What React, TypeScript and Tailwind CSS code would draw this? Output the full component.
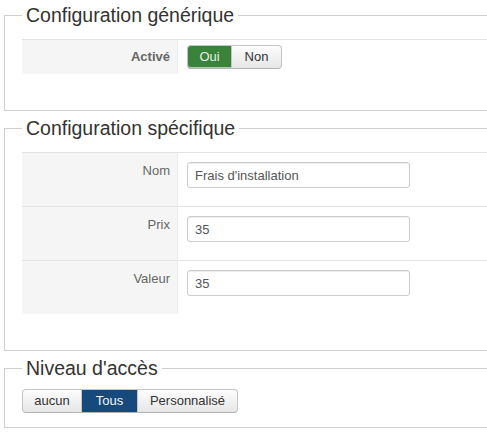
import type { ReactNode } from 'react'

const btnBase =
  'h-[24px] text-[13px] leading-[18px] border border-[#c5c5c5] border-b-[#b3b3b3] flex items-center justify-center'
const btnIdle = 'bg-linear-to-b from-[#fdfdfd] to-[#e6e6e6] text-[#333]'

function Fieldset({
  title,
  className,
  children,
}: {
  title: string
  className?: string
  children: ReactNode
}) {
  return (
    <fieldset
      className={`ml-[4px] w-[520px] border border-r-0 border-[#cfcfcf] pl-[17px] ${className ?? ''}`}
    >
      <legend className="px-[4px] text-[19.5px] leading-[30px] text-[#333]">{title}</legend>
      {children}
    </fieldset>
  )
}

function FieldRow({ label, value }: { label: string; value: string }) {
  return (
    <div className="flex h-[54px] border-t border-[#e3e3e3]">
      <div className="w-[156px] bg-[#f5f5f5] border-r border-[#ececec] pt-[9px] pr-[7px] text-right text-[13px] leading-[18px] text-[#666]">
        {label}
      </div>
      <div className="pl-[9px] pt-[9px]">
        <input
          readOnly
          value={value}
          className="w-[223px] h-[26px] border border-[#ccc] rounded-[3px] px-[7px] text-[13px] text-[#555] shadow-[inset_0_1px_1px_rgba(0,0,0,0.075)] outline-none"
        />
      </div>
    </div>
  )
}

export default function App() {
  return (
    <div className="w-[487px] h-[442px] overflow-hidden bg-white font-['Liberation_Sans',Arial,sans-serif]">
      {/* Generic settings */}
      <Fieldset title="Configuration générique" className="pt-[9px] pb-[36px]">
        <div className="flex h-[35px] border-t border-[#e3e3e3]">
          <div className="w-[156px] bg-[#f5f5f5] border-r border-[#ececec] pt-[8px] pr-[7px] text-right text-[13px] leading-[18px] font-bold text-[#666]">
            Activé
          </div>
          <div className="pl-[9px] pt-[5px]">
            <div className="flex">
              <button
                type="button"
                className={`${btnBase} w-[45px] rounded-l-[4px] bg-[#3a833a] border-[#2e6b2e] text-[#e4f1e4] shadow-[inset_0_-1px_0_rgba(255,255,255,0.6)]`}
              >
                Oui
              </button>
              <button
                type="button"
                className={`${btnBase} ${btnIdle} w-[50px] border-l-0 rounded-r-[4px]`}
              >
                Non
              </button>
            </div>
          </div>
        </div>
      </Fieldset>

      {/* Specific settings */}
      <Fieldset title="Configuration spécifique" className="mt-[2px] pt-[9px] pb-[36px]">
        <FieldRow label="Nom" value="Frais d'installation" />
        <FieldRow label="Prix" value="35" />
        <FieldRow label="Valeur" value="35" />
      </Fieldset>

      {/* Access level */}
      <Fieldset title="Niveau d'accès" className="mt-[2px] pt-[6px] pb-[14px]">
        <div className="flex">
          <button type="button" className={`${btnBase} ${btnIdle} w-[60px] rounded-l-[4px]`}>
            aucun
          </button>
          <button
            type="button"
            className={`${btnBase} w-[56px] border-l-0 bg-[#164a7d] border-[#123c66] text-[#f2f6fa]`}
          >
            Tous
          </button>
          <button
            type="button"
            className={`${btnBase} ${btnIdle} w-[100px] border-l-0 rounded-r-[4px]`}
          >
            Personnalisé
          </button>
        </div>
      </Fieldset>
    </div>
  )
}
